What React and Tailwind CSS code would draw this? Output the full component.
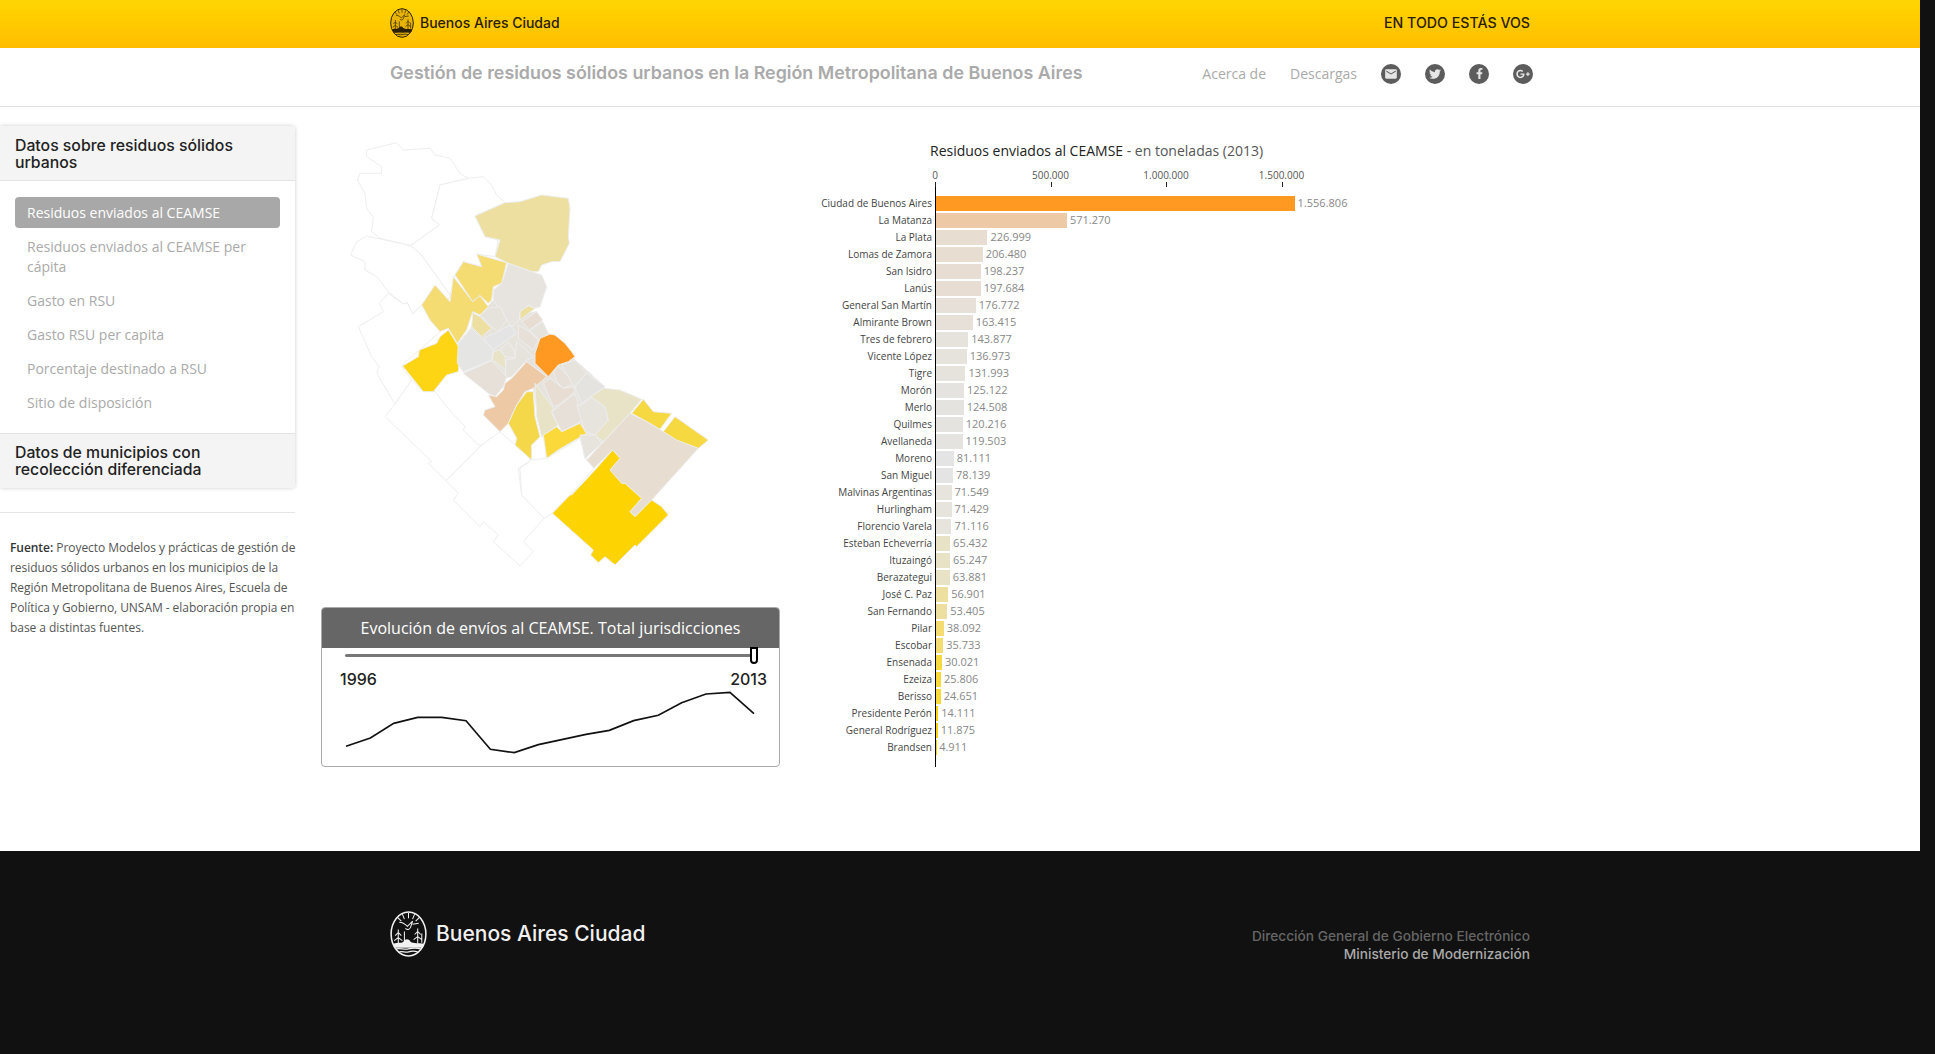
import { FaTwitter, FaFacebookF, FaGooglePlusG } from "react-icons/fa";
import { MdEmail } from "react-icons/md";

const menu = [
  "Residuos enviados al CEAMSE",
  "Residuos enviados al CEAMSE per cápita",
  "Gasto en RSU",
  "Gasto RSU per capita",
  "Porcentaje destinado a RSU",
  "Sitio de disposición",
];

const filas = [
  ["Ciudad de Buenos Aires", 1556806, "#ff9922"],
  ["La Matanza", 571270, "#edc9a5"],
  ["La Plata", 226999, "#e7ddd1"],
  ["Lomas de Zamora", 206480, "#e7ddd1"],
  ["San Isidro", 198237, "#e7ddd2"],
  ["Lanús", 197684, "#e7ddd2"],
  ["General San Martín", 176772, "#e7e0d8"],
  ["Almirante Brown", 163415, "#e7e0d8"],
  ["Tres de febrero", 143877, "#e6e2dc"],
  ["Vicente López", 136973, "#e6e2dc"],
  ["Tigre", 131993, "#e6e2dc"],
  ["Morón", 125122, "#e5e3e0"],
  ["Merlo", 124508, "#e5e3e0"],
  ["Quilmes", 120216, "#e5e3e0"],
  ["Avellaneda", 119503, "#e5e3e0"],
  ["Moreno", 81111, "#e4e4e4"],
  ["San Miguel", 78139, "#e4e4e4"],
  ["Malvinas Argentinas", 71549, "#e6e4dc"],
  ["Hurlingham", 71429, "#e6e4dc"],
  ["Florencio Varela", 71116, "#e6e4dc"],
  ["Esteban Echeverría", 65432, "#e8e3c6"],
  ["Ituzaingó", 65247, "#e8e3c6"],
  ["Berazategui", 63881, "#e8e3c6"],
  ["José C. Paz", 56901, "#ecdfa0"],
  ["San Fernando", 53405, "#ecdfa0"],
  ["Pilar", 38092, "#f5dc72"],
  ["Escobar", 35733, "#f5dc72"],
  ["Ensenada", 30021, "#f6d840"],
  ["Ezeiza", 25806, "#f8da3a"],
  ["Berisso", 24651, "#f8da3a"],
  ["Presidente Perón", 14111, "#fdd514"],
  ["General Rodríguez", 11875, "#fdd514"],
  ["Brandsen", 4911, "#fdd402"],
];

// coordenadas tomadas sobre el mapa ampliado x3
const partidos = [
  ["#fff", "140,60 230,38 250,60 330,55 345,75 390,85 420,130 445,145 360,165 335,265 358,285 272,347 180,325 155,305 160,262 140,235 135,190 112,150 120,130 185,130 185,110 140,80"],
  ["#fff", "360,165 445,145 490,140 515,165 530,195 555,218 465,258 495,320 535,330 525,380 470,372 485,410 430,395 405,435 390,495 355,445 300,370 272,347 358,285 335,265"],
  ["#fff", "92,375 110,335 140,318 272,347 300,370 355,445 390,495 385,510 345,470 305,525 278,552 262,518 250,522 205,485 170,440 135,420 135,395"],
  ["#fff", "115,590 190,545 178,520 205,490 250,522 262,518 278,552 305,525 335,575 362,605 298,660 262,690 245,708 275,750 225,822 170,730 178,710 155,680"],
  ["#fff", "195,860 225,822 275,750 310,785 345,785 380,830 435,890 430,900 475,945 485,945 378,1052 325,1000 335,995"],
  ["#fff", "378,1052 485,945 540,905 635,990 595,1015 605,1095 672,1165 610,1235 640,1265 600,1308 520,1235 535,1215 490,1175 480,1190 400,1110 415,1090"],
  ["#fff", "600,1015 635,990 680,985 780,925 800,990 822,1015 755,1090 697,1150 672,1165 605,1095"],
  // fondo de la zona central, tapa los huecos entre partidos chicos
  ["#e6e2dc", "455,590 480,555 520,510 600,550 650,545 685,610 765,690 855,770 815,800 865,870 845,940 795,985 780,915 715,885 665,920 640,775 620,695 555,745 515,692 430,725 412,700 415,640"],
  ["#ecdfa0", "465,258 555,218 600,215 665,195 745,205 750,235 745,320 748,340 720,395 695,395 665,405 655,425 635,425 565,400 525,380 540,330 495,320"],
  ["#f5dc72", "470,372 560,398 545,460 520,470 515,510 505,520 480,497 458,515 405,435 430,395 485,410"],
  ["#f5dc72", "345,465 390,515 400,440 458,515 480,497 505,530 480,555 458,545 440,600 412,640 385,595 360,605 330,570 305,525"],
  ["#fdd514", "248,708 295,680 298,660 350,640 360,620 385,600 422,660 415,725 380,735 340,785 310,785"],
  ["#e7e4df", "565,400 635,425 665,435 680,470 660,530 645,535 625,525 600,550 598,570 575,590 520,510 520,480 545,460"],
  ["#ecdfa0", "600,545 625,527 645,535 600,570"],
  ["#e7ddd2", "605,575 650,545 668,570 628,600"],
  ["#e6e2dc", "628,602 668,575 685,610 660,630"],
  ["#e7e0d8", "595,585 628,605 655,630 640,660 595,625"],
  ["#e6e2dc", "480,555 505,535 540,530 560,570 535,605 515,590"],
  ["#ecdfa0", "458,548 480,560 515,595 485,620 455,590"],
  ["#e4e4e4", "490,625 535,605 570,585 590,610 540,645 520,660"],
  ["#e5e5e3", "455,595 490,630 520,660 515,690 490,700 430,725 412,700 415,640"],
  ["#e6e4dc", "540,660 565,635 585,665 585,685 555,680"],
  ["#e8e3c6", "540,660 555,680 558,720 518,690 520,665"],
  ["#e6e2dc", "590,635 640,680 620,690 575,740 555,745 558,690 585,685"],
  ["#e7e0d8", "430,730 515,692 560,740 550,770 525,800 505,790"],
  ["#edc9a5", "620,695 680,740 640,775 615,785 590,825 565,880 540,905 490,855 495,840 525,830 505,795 530,800 550,780 555,760 575,745"],
  ["#ff9922", "660,625 690,612 705,615 735,640 755,665 765,680 745,695 715,705 685,740 645,700 645,670"],
  ["#e7e0d8", "700,725 715,708 765,760 730,775 710,755"],
  ["#e6e2dc", "725,705 765,690 800,730 762,770"],
  ["#e5e3e0", "765,770 800,728 855,770 815,798 785,822"],
  ["#e7ddd2", "670,760 690,745 710,760 730,775 760,770 765,785 715,825 700,830"],
  ["#f5d84a", "620,785 640,785 645,860 660,920 635,945 635,990 585,945 590,925 565,880 590,825"],
  ["#e8e3c6", "645,760 700,835 695,850 715,885 665,920 650,860"],
  ["#fbd93a", "670,915 710,890 725,905 780,880 800,910 715,960 680,985"],
  ["#e7e0d8", "695,845 765,790 790,870 725,905"],
  ["#e6e4dc", "785,825 815,800 855,830 865,870 825,915 795,905 770,825"],
  ["#e6e4dc", "780,915 825,915 845,940 795,985"],
  ["#e8e3c6", "812,800 850,775 900,780 965,808 930,850 850,935 825,915 865,870 855,830"],
  ["#e7ddd1", "800,990 930,850 990,880 1030,905 1135,955 995,1110 945,1160 930,1145 965,1105 915,1060 895,1065 870,1020 900,985 878,960 822,1015"],
  ["#fdd402", "697,1150 750,1095 755,1095 825,1020 878,960 900,985 870,1020 905,1060 915,1060 965,1105 930,1145 945,1160 995,1110 1025,1130 1045,1155 950,1250 945,1245 885,1305 855,1280 835,1298 812,1275 820,1260"],
  ["#f6d840", "1030,905 1065,860 1165,930 1135,955 1070,930"],
  ["#f6d840", "935,850 970,808 1000,845 1055,850 1020,898 990,880"],
];

const evolucion = "105,437 178,412 248,368 320,350 392,350 465,360 538,446 610,456 682,432 752,417 825,401 895,389 968,360 1042,344 1112,306 1185,280 1257,275 1329,339";

function Escudo({ className, color, fondo, borde }) {
  return (
    <svg viewBox="0 0 36 45" className={className}>
      <ellipse cx="18" cy="22.5" rx="17" ry="21.5" fill={fondo} stroke={borde} strokeWidth="1.5" />
      <g stroke={color} strokeWidth="1" fill="none">
        <path d="M18 2v5M12 3l2 5M24 3l-2 5M7 6l4 4M29 6l-4 4" />
        <path d="M9 11c4 0 6 2 8 4l5-5-2 6c-1 2-3 3-5 1M22 13l6-1" />
        <path d="M8 18v14M5 24l3-3 3 3M4 29l4-3 4 3M27 17v15M24 23l3-3 3 3M23 28l4-3 4 3M14 20v12M31 22v9" />
      </g>
      <path d="M3 32c5-2 8 0 10-2 2-3 5-3 7 0 3 2 8 1 13 2l-1 4H5z" fill={color} />
      <path d="M6 37c4-1 8 1 12 0s8-1 12 0M9 40c3-1 6 1 9 0s6-1 9 0" stroke={color} strokeWidth="1.2" fill="none" />
    </svg>
  );
}

function Social({ children }) {
  return (
    <a className="w-5 h-5 rounded-full bg-[#5c5c5c] text-[#e6e6e6] flex items-center justify-center">
      {children}
    </a>
  );
}

function Encabezado({ children, className }) {
  return (
    <h3 className={`bg-[#f4f4f4] px-[15px] font-['Inter',sans-serif] font-medium text-[15.8px] leading-[16.5px] text-[#222] ${className}`}>
      {children}
    </h3>
  );
}

function Sidebar() {
  return (
    <aside className="w-[295px] shrink-0 pt-[19px]">
      <div className="rounded-r shadow-[0_0_4px_rgba(0,0,0,0.2)] bg-white">
        <Encabezado className="h-[55px] pt-[12px] border-b border-[#e2e2e2] rounded-tr">
          Datos sobre residuos sólidos urbanos
        </Encabezado>
        <ul className="px-[15px] pt-[16px] pb-[15px] flex flex-col gap-[3px] text-[14px] leading-[20px] text-[#aaa]">
          {menu.map((item, i) => (
            <li
              key={item}
              className={`px-3 py-[5.5px] rounded ${i === 0 ? "bg-[#a8a8a8] text-white" : ""}`}
            >
              {item}
            </li>
          ))}
        </ul>
        <Encabezado className="h-[55px] pt-[11px] border-t border-[#e2e2e2] rounded-br">
          Datos de municipios con recolección diferenciada
        </Encabezado>
      </div>
      <hr className="mt-[24px] border-[#e5e5e5]" />
      <p className="pl-[10px] mt-[25px] text-[12px] leading-[20px] tracking-[-0.05px] text-[#555] whitespace-nowrap">
        <b className="font-semibold text-[#333]">Fuente:</b> Proyecto Modelos y prácticas de gestión de<br />
        residuos sólidos urbanos en los municipios de la<br />
        Región Metropolitana de Buenos Aires, Escuela de<br />
        Política y Gobierno, UNSAM - elaboración propia en<br />
        base a distintas fuentes.
      </p>
    </aside>
  );
}

function Mapa() {
  return (
    <svg viewBox="0 0 1260 1350" className="block w-[420px] h-[450px] -ml-px">
      {partidos.map(([fill, points]) => (
        <polygon key={points} points={points} fill={fill} stroke="#eeeeee" strokeWidth="3" strokeLinejoin="round" />
      ))}
    </svg>
  );
}

function Evolucion() {
  return (
    <div className="mt-[27px] w-[459px] h-[160px] border border-[#aaa] rounded overflow-hidden bg-white">
      <div className="h-[40px] bg-[#666] text-white text-[16px] leading-[40px] text-center">
        Evolución de envíos al CEAMSE. Total jurisdicciones
      </div>
      <div className="relative h-[3px] mt-[6px] ml-[23px] w-[408px] bg-[#777] rounded-full">
        <span className="absolute right-[-5px] top-[-7px] w-[8px] h-[17px] bg-white border-2 border-black rounded-b-[4px]" />
      </div>
      <div className="flex justify-between pl-[18px] pr-[12px] mt-[12px] font-['Inter',sans-serif] font-medium text-[16px] leading-[20px] text-[#222]">
        <span>1996</span>
        <span>2013</span>
      </div>
      <svg viewBox="96 265 1248 200" className="block w-[416px] h-[66.67px] ml-[21px]">
        <polyline points={evolucion} fill="none" stroke="#111" strokeWidth="5" />
      </svg>
    </div>
  );
}

function Grafico() {
  return (
    <section className="ml-[20px] w-[560px] pt-[34px]">
      <h4 className="ml-[130px] text-[14px] leading-[20px] text-[#555] whitespace-nowrap">
        <span className="text-[#222]">Residuos enviados al CEAMSE</span> - en toneladas (2013)
      </h4>
      <div className="ml-[135px] flex h-[21px] pt-[7px] text-[10px] leading-[14px] text-[#555]">
        {["0", "500.000", "1.000.000", "1.500.000"].map((t) => (
          <div key={t} className="w-[115.5px] shrink-0 h-[14px]">
            <span className="inline-block -translate-x-1/2">{t}</span>
            <span className="block w-px h-[5px] bg-[#222]" />
          </div>
        ))}
      </div>
      <div className="h-[13px] ml-[135px] border-l border-black" />
      {filas.map(([nombre, valor, color]) => (
        <div key={nombre} className="flex h-[17px] items-center">
          <span className="w-[132px] mr-[3px] text-right text-[10px] leading-[17px] text-[#444] whitespace-nowrap">
            {nombre}
          </span>
          <div className="h-[17px] flex items-center border-l border-black">
            <div className="h-[15px]" style={{ width: valor * 0.000231 - 1, background: color }} />
            <span className="ml-[3px] text-[11px] text-[#888]">{valor.toLocaleString("de-DE")}</span>
          </div>
        </div>
      ))}
      <div className="h-[11px] ml-[135px] border-l border-black" />
    </section>
  );
}

export default function App() {
  return (
    <div className="h-[1054px] overflow-hidden bg-[#111] font-['Open_Sans',sans-serif]">
      <div className="w-[1920px] h-[851px] bg-white">
        <header className="h-[48px] pb-[3px] bg-gradient-to-b from-[#ffd600] to-[#ffbe00] flex items-center justify-between pl-[390px] pr-[390px] text-[#2a2000] font-['Inter',sans-serif]">
          <div className="flex items-center gap-[6px]">
            <Escudo className="w-[24px] h-[30px]" color="#2a2000" fondo="#e8b400" borde="#2a2000" />
            <span className="text-[14px] font-medium">Buenos Aires Ciudad</span>
          </div>
          <span className="text-[14.2px] font-medium">EN TODO ESTÁS VOS</span>
        </header>
        <nav className="h-[59px] pb-[7px] border-b border-[#e2e2e2] flex items-center pl-[390px] pr-[387px]">
          <h2 className="font-['Inter',sans-serif] font-semibold text-[17.85px] text-[#aaa]">
            Gestión de residuos sólidos urbanos en la Región Metropolitana de Buenos Aires
          </h2>
          <a className="ml-auto text-[14px] text-[#aaa]">Acerca de</a>
          <a className="ml-[24px] text-[14px] text-[#aaa]">Descargas</a>
          <div className="ml-[24px] flex gap-[24px]">
            <Social><MdEmail size={14} /></Social>
            <Social><FaTwitter size={12} /></Social>
            <Social><FaFacebookF size={11} /></Social>
            <Social><FaGooglePlusG size={14} /></Social>
          </div>
        </nav>
        <main className="flex">
          <Sidebar />
          <div className="ml-[26px] w-[459px] pt-[23px]">
            <Mapa />
            <Evolucion />
          </div>
          <Grafico />
        </main>
      </div>
      <footer className="h-[203px] flex justify-between pl-[390px] pr-[405px]">
        <div className="flex items-start gap-[9px] pt-[60px]">
          <Escudo className="w-[37px] h-[46px]" color="#f2f2f2" fondo="#111" borde="#f2f2f2" />
          <span className="font-['Inter',sans-serif] font-medium text-[21px] leading-[46px] text-[#f0f0f0]">Buenos Aires Ciudad</span>
        </div>
        <div className="pt-[76px] text-right font-['Inter',sans-serif] font-medium text-[13.7px] leading-[18px]">
          <p className="text-[#666]">Dirección General de Gobierno Electrónico</p>
          <p className="text-[#aaa]">Ministerio de Modernización</p>
        </div>
      </footer>
    </div>
  );
}
